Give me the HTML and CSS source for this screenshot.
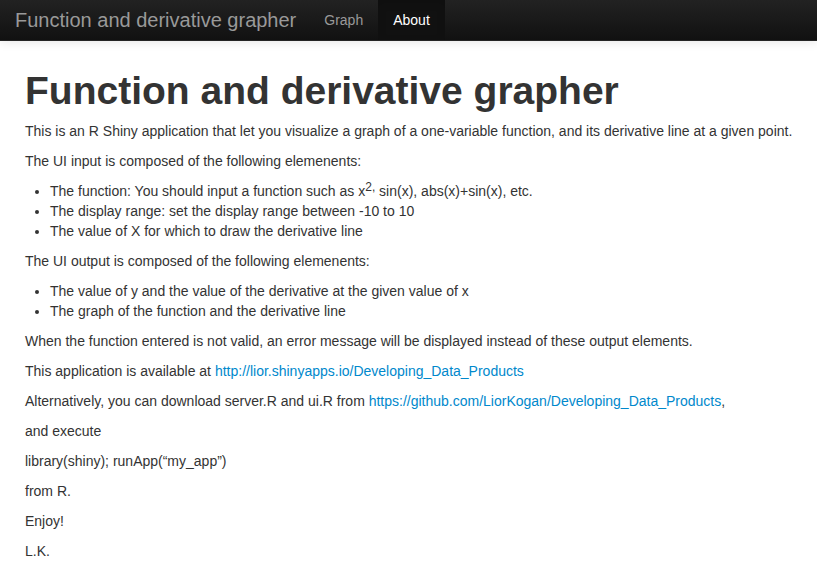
FILE: index.html
```html
<!DOCTYPE html>
<html lang="en">
<head>
<meta charset="utf-8">
<meta name="viewport" content="width=device-width, initial-scale=1">
<title>Function and derivative grapher</title>
<link rel="stylesheet" href="styles.css">
</head>
<body>
<header class="navbar">
  <span class="brand">Function and derivative grapher</span>
  <nav class="nav">
    <a class="nav-link" href="#graph">Graph</a>
    <a class="nav-link active" href="#about" aria-current="page">About</a>
  </nav>
</header>
<main class="content">
  <h1>Function and derivative grapher</h1>
  <p>This is an R Shiny application that let you visualize a graph of a one-variable function, and its derivative line at a given point.</p>
  <p>The UI input is composed of the following elemenents:</p>
  <ul>
    <li>The function: You should input a function such as x<sup>2,</sup> sin(x), abs(x)+sin(x), etc.</li>
    <li>The display range: set the display range between -10 to 10</li>
    <li>The value of X for which to draw the derivative line</li>
  </ul>
  <p>The UI output is composed of the following elemenents:</p>
  <ul>
    <li>The value of y and the value of the derivative at the given value of x</li>
    <li>The graph of the function and the derivative line</li>
  </ul>
  <p>When the function entered is not valid, an error message will be displayed instead of these output elements.</p>
  <p>This application is available at <a href="http://lior.shinyapps.io/Developing_Data_Products">http://lior.shinyapps.io/Developing_Data_Products</a></p>
  <p>Alternatively, you can download server.R and ui.R from <a href="https://github.com/LiorKogan/Developing_Data_Products">https://github.com/LiorKogan/Developing_Data_Products</a>,</p>
  <p>and execute</p>
  <p>library(shiny); runApp(“my_app”)</p>
  <p>from R.</p>
  <p>Enjoy!</p>
  <p>L.K.</p>
</main>
</body>
</html>
```
FILE: styles.css
```css
body {
  margin: 0;
  background: #fff;
  color: #333;
  font-family: "Liberation Sans", Arial, sans-serif;
  font-size: 14px;
  line-height: 20px;
}

.navbar {
  display: flex;
  align-items: stretch;
  min-height: 40px;
  padding-left: 15px;
  background: linear-gradient(#222, #111);
  border-bottom: 1px solid #252525;
  box-shadow: 0 1px 10px rgba(0, 0, 0, 0.1);
}

.brand {
  padding: 10px 13px 10px 0;
  color: #999;
  font-size: 20px;
}

.nav {
  display: flex;
}

.nav-link {
  padding: 10px 15px;
  color: #999;
  text-decoration: none;
}

.nav-link.active {
  color: #fff;
  background: #111;
  box-shadow: inset 0 3px 8px rgba(0, 0, 0, 0.125);
}

.content {
  padding: 30px 0 0 25px;
}

h1 {
  margin: 0 0 10px;
  font-size: 39px;
  line-height: 40px;
}

p {
  margin: 0 0 10px;
}

ul {
  margin: 0 0 10px 25px;
  padding: 0;
}

sup {
  position: relative;
  top: -5px;
  font-size: 12px;
  line-height: 0;
  vertical-align: baseline;
}

.content a {
  color: #08c;
  text-decoration: none;
}
```
